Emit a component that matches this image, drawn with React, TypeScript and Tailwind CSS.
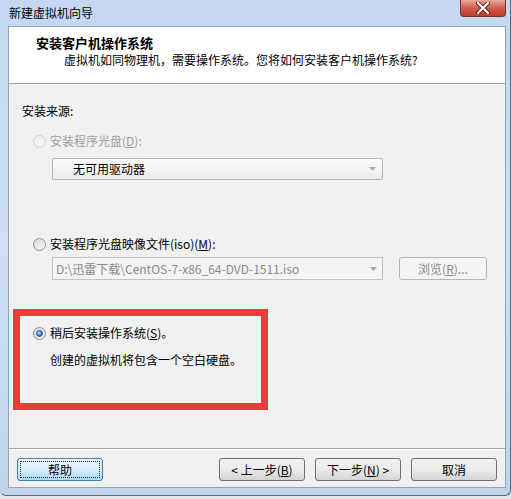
import type { ReactNode } from "react";

function Radio({ checked, disabled }: { checked?: boolean; disabled?: boolean }) {
  return (
    <span
      className={`flex h-[13px] w-[13px] shrink-0 items-center justify-center rounded-full border ${
        disabled
          ? "border-[#cfcfcf] bg-[#f2f2f2]"
          : "border-[#8e8f8f] bg-linear-to-br from-[#d6d6d6] to-[#fbfbfb]"
      }`}
    >
      {checked && (
        <span className="h-[7px] w-[7px] rounded-full border border-[#1f4f8a] bg-[radial-gradient(circle_at_35%_35%,#b8e2ff,#3b82c8_60%,#1d5393)]" />
      )}
    </span>
  );
}

function Arrow({ color = "#9a9a9a" }: { color?: string }) {
  return (
    <svg width="7" height="4" viewBox="0 0 7 4" aria-hidden="true">
      <path d="M0 0h7L3.5 4z" fill={color} />
    </svg>
  );
}

function Btn({ children, focused }: { children: ReactNode; focused?: boolean }) {
  return (
    <button
      className={`relative flex h-[23px] w-[86px] items-center justify-center rounded-[3px] border text-[12px] leading-none text-black ${
        focused
          ? "border-[#3c7fb1] bg-linear-to-b from-[#eaf6fd] via-[#d9f0fc] to-[#a7d9f5]"
          : "border-[#707070] bg-linear-to-b from-[#f2f2f2] via-[#ebebeb] to-[#d3d3d3]"
      }`}
    >
      {focused && (
        <span className="absolute inset-[2px] rounded-[1px] border border-dotted border-[#222]" />
      )}
      {children}
    </button>
  );
}

export default function App() {
  return (
    <div className="h-[499px] w-[511px] overflow-hidden bg-[#e4e6e9] font-['Noto_Sans_CJK_SC','Microsoft_YaHei',sans-serif] text-[12px] text-black">
      {/* window frame */}
      <div className="relative flex h-[496px] w-[511px] flex-col rounded-b-[6px] border-r border-b border-[#56687e] bg-linear-to-b from-[#c3d8ef] via-[#cfe0f2] to-[#c0d4ea]">
        {/* title bar */}
        <div className="flex h-[26px] shrink-0 items-center pl-[9px] leading-[26px] text-[12px] text-black">
          新建虚拟机向导
        </div>
        <div className="absolute right-[4px] top-0 flex h-[17px] w-[46px] items-center justify-center rounded-b-[4px] border border-t-0 border-[#7a2e26] bg-linear-to-b from-[#e6a898] via-[#cf5a4b] to-[#c23c2b]">
          <svg width="14" height="12" viewBox="0 0 14 12" aria-hidden="true">
            <path
              d="M2 1l10 10M12 1L2 11"
              stroke="#5a1e18"
              strokeWidth="4"
              strokeLinecap="round"
            />
            <path
              d="M2 1l10 10M12 1L2 11"
              stroke="#ffffff"
              strokeWidth="2.2"
              strokeLinecap="round"
            />
          </svg>
        </div>

        {/* client area */}
        <div className="ml-[8px] flex h-[462px] w-[498px] flex-col border border-[#8ea3bc] bg-[#f0f0f0]">
          {/* header */}
          <div className="h-[57px] shrink-0 border-b border-[#a0a0a0] bg-white pt-[8px]">
            <div className="pl-[27px] text-[13px] font-bold leading-[16px]">安装客户机操作系统</div>
            <div className="mt-[1px] pl-[55px] leading-[16px]">
              虚拟机如同物理机，需要操作系统。您将如何安装客户机操作系统?
            </div>
          </div>

          {/* body */}
          <div className="flex h-[364px] flex-col">
            <div className="pl-[13px] pt-[19px] leading-[16px]">安装来源:</div>

            <div className="mt-[14px] flex h-[16px] items-center gap-[4px] pl-[24px] text-[#a0a0a0]">
              <Radio disabled />
              <span>
                安装程序光盘(<span className="underline">D</span>):
              </span>
            </div>

            <div className="ml-[43px] mt-[9px] flex h-[22px] w-[331px] items-center justify-between rounded-[2px] border border-[#b4b4b4] bg-linear-to-b from-[#fbfbfb] to-[#ececec] pl-[20px] pr-[6px]">
              <span>无可用驱动器</span>
              <Arrow color="#b0b0b0" />
            </div>

            <div className="mt-[56px] flex h-[16px] items-center gap-[4px] pl-[24px]">
              <Radio />
              <span>
                安装程序光盘映像文件(iso)(<span className="underline">M</span>):
              </span>
            </div>

            <div className="ml-[43px] mt-[5px] flex h-[23px] items-center">
              <div className="flex h-[23px] w-[331px] items-center justify-between border border-[#c2c2c2] bg-[#f4f4f4] pl-[3px] pr-[5px] text-[#8a8a8a]">
                <span>D:\迅雷下载\CentOS-7-x86_64-DVD-1511.iso</span>
                <Arrow color="#a8a8a8" />
              </div>
              <div className="ml-[16px] flex h-[23px] w-[88px] items-center justify-center rounded-[3px] border border-[#b5b5b5] bg-[#f4f4f4] text-[#8a8a8a]">
                浏览(<span className="underline">R</span>)...
              </div>
            </div>

            {/* highlighted option */}
            <div className="ml-[4px] mt-[29px] h-[101px] w-[255px] border-[7px] border-[#ef3a3a] pl-[13px] pt-[9px]">
              <div className="flex h-[16px] items-center gap-[4px]">
                <Radio checked />
                <span>
                  稍后安装操作系统(<span className="underline">S</span>)。
                </span>
              </div>
              <div className="ml-[17px] mt-[11px] leading-[16px]">创建的虚拟机将包含一个空白硬盘。</div>
            </div>
          </div>

          {/* footer */}
          <div className="flex flex-1 items-start justify-between border-t border-[#a0a0a0] px-[8px] pt-[9px] shadow-[inset_0_1px_0_#ffffff]">
            <Btn focused>帮助</Btn>
            <div className="flex gap-[10px]">
              <Btn>
                &lt; 上一步(<span className="underline">B</span>)
              </Btn>
              <Btn>
                下一步(<span className="underline">N</span>) &gt;
              </Btn>
              <Btn>取消</Btn>
            </div>
          </div>
        </div>
      </div>
    </div>
  );
}
